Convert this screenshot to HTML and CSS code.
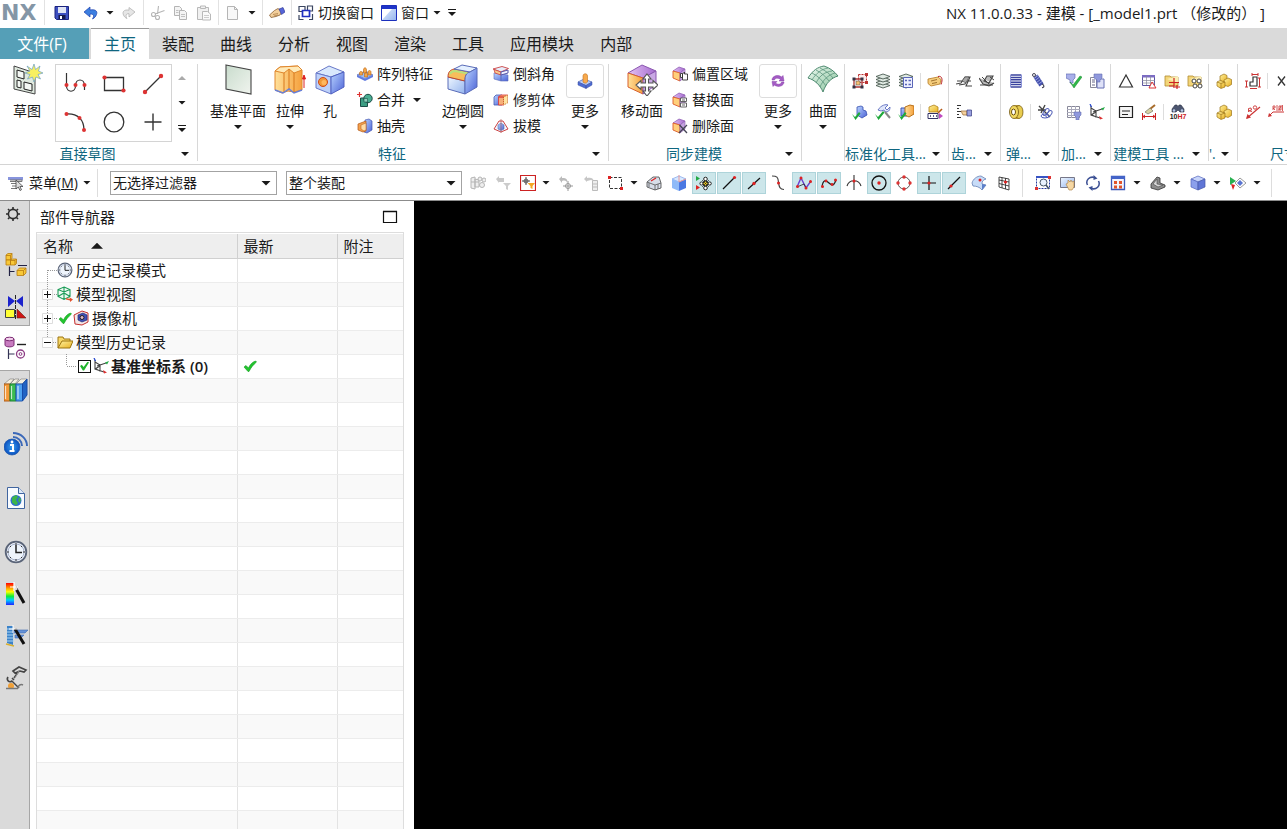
FILE: index.html
```html
<!DOCTYPE html>
<html lang="zh-CN">
<head>
<meta charset="utf-8">
<meta name="viewport" content="width=device-width, initial-scale=1">
<title>NX 11.0.0.33 - 建模</title>
<link rel="stylesheet" href="styles.css">
</head>
<body>
<svg class="sprite" aria-hidden="true">
<defs>
<linearGradient id="gBlue" x1="0" y1="0" x2="1" y2="1"><stop offset="0" stop-color="#b9d4ff"/><stop offset="1" stop-color="#4b62d6"/></linearGradient>
<linearGradient id="gLight" x1="0" y1="0" x2="1" y2="1"><stop offset="0" stop-color="#eef6ff"/><stop offset="1" stop-color="#94b4ee"/></linearGradient>
<linearGradient id="gOrange" x1="0" y1="0" x2="1" y2="0"><stop offset="0" stop-color="#ffe09a"/><stop offset="1" stop-color="#f5a03c"/></linearGradient>
<linearGradient id="gYellow" x1="0" y1="0" x2="1" y2="1"><stop offset="0" stop-color="#fff2a0"/><stop offset="1" stop-color="#e8b020"/></linearGradient>
<linearGradient id="gPlate" x1="0" y1="0" x2="1" y2="1"><stop offset="0" stop-color="#c9dccd"/><stop offset="1" stop-color="#f0f4ee"/></linearGradient>
<linearGradient id="gGreen" x1="0" y1="0" x2="1" y2="1"><stop offset="0" stop-color="#eef9f0"/><stop offset="1" stop-color="#86c29c"/></linearGradient>
<linearGradient id="gPurple" x1="0" y1="0" x2="1" y2="0"><stop offset="0" stop-color="#e3c2f2"/><stop offset="1" stop-color="#a56bd0"/></linearGradient>
<linearGradient id="gRain" x1="0" y1="0" x2="0" y2="1"><stop offset="0" stop-color="#f00"/><stop offset=".25" stop-color="#fa0"/><stop offset=".4" stop-color="#ff0"/><stop offset=".6" stop-color="#1e3"/><stop offset=".78" stop-color="#0cf"/><stop offset="1" stop-color="#22f"/></linearGradient>
<radialGradient id="gInfo"><stop offset="0" stop-color="#3aa0f0"/><stop offset="1" stop-color="#0a50c0"/></radialGradient>
</defs>

<symbol id="save" viewBox="0 0 16 16"><path d="M1 1.500h13.500v13H2.500L1 13z" fill="#3c4fc0" stroke="#1b237e"/><path d="M4 2h8v6H4z" fill="#dfe4f4"/><path d="M4.500 10h7v4h-7z" fill="#161a4c"/><path d="M6 11h2v3H6z" fill="#fff"/></symbol>
<symbol id="undo" viewBox="0 0 16 16"><path d="M1 7l6-5v3c5-1 8 1 6.500 4.500-.7 2-2 3.500-4 4.500 1.500-2.500 2-5-2.500-5v3z" fill="#3c7fe0" stroke="#1c3fae" stroke-width=".7"/></symbol>
<symbol id="redo" viewBox="0 0 16 16"><path d="M14 7L8 2.500v2.700C3 4.200 1 7 2.500 10c.6 1.500 2 3 3.500 3.500C4.500 11 4.500 8.500 8 8.700V12z" fill="#e6e6e6" stroke="#b4b4b4" stroke-width=".8"/></symbol>
<symbol id="cut" viewBox="0 0 16 16"><g fill="none" stroke="#b5b5b5" stroke-width="1.100"><path d="M8.500 1L7.500 9M14.500 5.500L5 9"/><circle cx="3.500" cy="9.500" r="2"/><circle cx="7.500" cy="12.500" r="2"/></g></symbol>
<symbol id="copy" viewBox="0 0 16 16"><g fill="#f4f4f4" stroke="#b4b4b4"><path d="M1.500 1.500h5l2 2v7h-7z"/><path d="M6.500 5.500h5l2 2v7h-7z"/><path d="M3 5.500h2.500M3 7.500h2.500M8 9.500h4M8 11.500h4" stroke-width=".8"/></g></symbol>
<symbol id="paste" viewBox="0 0 16 16"><g fill="#f1f1f1" stroke="#b9b9b9"><path d="M1.500 2.500h11v12h-11z"/><path d="M4.500 1h5v2.500h-5z"/><path d="M6.500 6.500h5l3 2.500v6h-8z" fill="#fafafa"/><path d="M8 10.500h5M8 12.500h5" stroke-width=".7"/></g></symbol>
<symbol id="newdoc" viewBox="0 0 16 16"><path d="M2.500 1.500h7l3 3v10h-10z" fill="#f8f8f8" stroke="#b5b5b5"/><path d="M9.500 1.500v3h3" fill="none" stroke="#b5b5b5"/></symbol>
<symbol id="handkey" viewBox="0 0 16 16"><path d="M.5 10l5-4.500L9 3.500l4 3-2 3.500-4 1.500-5 1z" fill="#f2cf9c" stroke="#8a6236" stroke-width=".8"/><path d="M10 4l4-1.500L16 7l-3.500 2.500z" fill="#5665d8" stroke="#26308e" stroke-width=".6"/><path d="M4 9.500l5-1M5 11l4-1" stroke="#a8763c" stroke-width=".7"/></symbol>
<symbol id="switchw" viewBox="0 0 16 16"><g fill="#fff" stroke="#3a4560" stroke-width="1.200"><path d="M1 1.500h6v5H1zM9.500 1h5v5h-5z"/><path d="M4.500 5.500h7v6h-7z" stroke="#2030c0" stroke-width="1.700"/><path d="M1 10v4.500h4.500M11 14.500h3.500V9" fill="none"/></g></symbol>
<symbol id="window" viewBox="0 0 16 16"><path d="M.5.500h15v15H.5z" fill="url(#gLight)" stroke="#1b2fbc"/><path d="M1 1h14v3H1z" fill="#1e34c8"/><path d="M1 4h10L1 15z" fill="#fff"/></symbol>

<symbol id="sketch" viewBox="0 0 32 32"><path d="M3 2l21 7v21L3 25z" fill="#dfe9df" stroke="#444"/><g fill="#f4f8f4" stroke="#222"><path d="M6 6l7 2v7l-7-2zM6 16l4 1v7l-4-1zM13 18l8 2v7l-8-2z"/></g><path d="M23 0l1.500 5.500L29 2l-1.500 5L32 9l-5 1.500 2.500 4.500-4.500-2-2 5-1.500-5-5 2 2.500-4.500-5-1.500 5-2L16 2l5 3.500z" fill="#f8f060" stroke="#6ca0c8" stroke-width=".7"/></symbol>
<symbol id="profile" viewBox="0 0 24 24"><path d="M3.500 1v13c0 7 9 7 9 0 0-8 9-8 9 0v4" fill="none" stroke="#333" stroke-width="1.200"/><g fill="#d33"><circle cx="3.500" cy="13" r="2"/><circle cx="12.500" cy="13" r="2"/><circle cx="21.500" cy="13" r="2"/></g></symbol>
<symbol id="rect" viewBox="0 0 24 24"><path d="M2.500 5.500h19v13h-19z" fill="none" stroke="#333" stroke-width="1.300"/><circle cx="2.500" cy="5.500" r="2.100" fill="#d33"/><circle cx="21.500" cy="18.500" r="2.100" fill="#d33"/></symbol>
<symbol id="line" viewBox="0 0 24 24"><path d="M4 20L20 4" stroke="#333" stroke-width="1.300"/><circle cx="4" cy="20" r="2.200" fill="#d33"/><circle cx="20" cy="4" r="2.200" fill="#d33"/></symbol>
<symbol id="arc" viewBox="0 0 24 24"><path d="M3 4C15 3 21 10 21 20" fill="none" stroke="#333" stroke-width="1.300"/><g fill="#d33"><circle cx="3.500" cy="4" r="2"/><circle cx="16.500" cy="8" r="2"/><circle cx="21" cy="20" r="2"/></g></symbol>
<symbol id="circle" viewBox="0 0 24 24"><circle cx="12" cy="12" r="9.800" fill="none" stroke="#333" stroke-width="1.300"/></symbol>
<symbol id="plus" viewBox="0 0 24 24"><path d="M12 3.500v17M3.500 12h17" stroke="#333" stroke-width="1.400"/></symbol>
<symbol id="plane" viewBox="0 0 32 32"><path d="M4 1l25 5v24L4 25z" fill="url(#gPlate)" stroke="#444" stroke-width="1.100"/></symbol>
<symbol id="extrude" viewBox="0 0 32 32"><path d="M1 7l5-4 18-1 4 4v20l-8 2-6-1-6 2-7-3z" fill="url(#gOrange)" stroke="#e0862c"/><path d="M1 7l5-4 18-1 4 4-8 3-5-4-5 4z" fill="#ffeab8" stroke="#e0862c"/><path d="M10 9v19M15 5v20M20 9v19" stroke="#d8781c"/><path d="M1 26l8 3 6-4 5 4 8-3" fill="none" stroke="#6880d8" stroke-width="1.500"/><path d="M30 24V13M28.500 15l1.500-4 1.500 4z" stroke="#d22" fill="#d22"/></symbol>
<symbol id="hole" viewBox="0 0 32 32"><path d="M2 9L15 2l15 6-13 5z" fill="#d9e8fc" stroke="#6878c8"/><path d="M2 9l15 4v17L2 24z" fill="#bdd1fa" stroke="#6878c8"/><path d="M17 13l13-5v15l-13 7z" fill="url(#gBlue)" stroke="#5060c0"/><circle cx="9" cy="18" r="4.500" fill="#f09a38" stroke="#d04818"/><circle cx="10" cy="18.500" r="2.500" fill="#ffb860"/></symbol>
<symbol id="pattern" viewBox="0 0 16 16"><path d="M0 9l8-4 8 4-8 4z" fill="#9cbcf4" stroke="#5164b8" stroke-width=".7"/><path d="M0 9v2l8 4 8-4V9l-8 4z" fill="#5f7ae0"/><path d="M2.500 7c0-2 3-2 3 0v2h-3zM6.500 4c0-3 3-3 3 0v3h-3zM7.500 8c0-2 3-2 3 0v3h-3zM11 6c0-2 3-2 3 0v3h-3z" fill="#f5a548" stroke="#b86a18" stroke-width=".6"/></symbol>
<symbol id="unite" viewBox="0 0 16 16"><path d="M3.500 6h7v8.500h-7z" fill="#3c9e83" stroke="#1c4d48"/><circle cx="11" cy="6.500" r="4.200" fill="#4aae92" stroke="#1c4d48"/><path d="M7 6.500h3.500V10H7z" fill="#8cd2bd" stroke="#1c4d48" stroke-width=".6"/><path d="M2.500 0v5M0 2.500h5" stroke="#d33" stroke-width="1.200"/></symbol>
<symbol id="shell" viewBox="0 0 16 16"><path d="M8 2l4-1 3 2v9l-5 3-3-1z" fill="url(#gBlue)" stroke="#4658b0" stroke-width=".7"/><path d="M1 6l8-3v10l-3 1-5-2z" fill="#f3a04c" stroke="#b25818" stroke-width=".7"/><path d="M4 7l5-2v7l-2 1-3-2z" fill="#ffdca6" stroke="#b25818" stroke-width=".5"/></symbol>
<symbol id="blend" viewBox="0 0 32 32"><path d="M1 13v12l17 5V17z" fill="url(#gLight)" stroke="#5a6cb8"/><path d="M1 13c0-5 2-7 6-8l16 3c-4 1-5 4-5 9z" fill="#f7bd5c" stroke="#c0442c"/><path d="M3 10c1-2 2-3 5-3l13 2.500" fill="none" stroke="#b8e07c" stroke-width="1.800"/><path d="M7 5l8-4 15 3-7 4z" fill="#e4f0ff" stroke="#5a6cb8"/><path d="M18 30V17c0-5 1-8 5-9l7-4v19z" fill="url(#gBlue)" stroke="#5a6cb8"/></symbol>
<symbol id="chamfer" viewBox="0 0 16 16"><path d="M1 7v6l7 2V8zM8 8l7 1v6l-7 0z" fill="url(#gBlue)" stroke="#5a6cb8" stroke-width=".6"/><path d="M0 3l9-2.500 6.500 2L8 6z" fill="#e6eefc" stroke="#c44" stroke-width=".9"/><path d="M1 3.500L8 6v3L2 7z" fill="#f8c88c" stroke="#c44" stroke-width=".8"/><path d="M8 6l7-2v3L8 9z" fill="#f3f3ff" stroke="#55a"/></symbol>
<symbol id="trim" viewBox="0 0 16 16"><path d="M1 5l2-2h6v10H1z" fill="url(#gBlue)" stroke="#4458b0" stroke-width=".8"/><path d="M5.500 5l2-2h7l-2 2zM5.500 5h5v8h-5z" fill="#f6b078" stroke="#d33" stroke-width=".8"/><path d="M10.500 5l4-2v8l-4 2z" fill="#ffe4a0" stroke="#c06820" stroke-dasharray="1 1"/></symbol>
<symbol id="draft" viewBox="0 0 16 16"><path d="M1 11l5-8h4l5 8-7 3z" fill="#f5f5ff" stroke="#c44"/><path d="M5 7l3-2 3 2v4l-3 1.500L5 11z" fill="url(#gBlue)" stroke="#57a" stroke-width=".6"/><path d="M8 1v14" stroke="#a55" stroke-width=".6"/></symbol>
<symbol id="boss" viewBox="0 0 16 16"><path d="M1 9l6-3 8 3-6 3.500z" fill="#b9cdf6" stroke="#4860b4" stroke-width=".7"/><path d="M1 9v3l8 3.500V12.500zM9 12.500v3l6-3.500V9z" fill="#4d6cd4" stroke="#3a4ca0" stroke-width=".5"/><path d="M6 3c0-3 4.500-3 4.500 0v6c-1 1.500-3.500 1.500-4.500 0z" fill="#f7a94d" stroke="#c47018" stroke-width=".6"/></symbol>

<symbol id="moveface" viewBox="0 0 32 32"><path d="M2 9L16 1l14 6-13 7z" fill="url(#gPurple)" stroke="#8a56b0"/><path d="M2 9l15 5v16L2 23z" fill="url(#gOrange)" stroke="#d8602c"/><path d="M17 14l13-7v14l-13 9z" fill="#c9a8e4" stroke="#8a56b0"/><path d="M21 10l4 5h-2.500v4H27v-2.500l5 4.500-5 4.500V23h-4.500v4H25l-4 5-4-5h2.500v-4H15v2.500L10 21l5-4.500V19h4.500v-4H17z" fill="#fff" stroke="#555" stroke-width="1.100"/></symbol>
<symbol id="facecube" viewBox="0 0 16 16"><path d="M1 5l6-4 6 2-5 4z" fill="url(#gPurple)" stroke="#8a56b0" stroke-width=".7"/><path d="M1 5l7 2v8l-7-3z" fill="#ffcf7a" stroke="#dc5a28" stroke-width=".9"/><path d="M8 7l5-4v8l-5 4z" fill="#c3a3df" stroke="#8a56b0" stroke-width=".6"/></symbol>
<symbol id="offset" viewBox="0 0 16 16"><use href="#facecube" width="16" height="16"/><path d="M8.500 7.500h2v4h-2zM10.500 8l2-2v2h3v6h-5z" fill="#fff" stroke="#333" stroke-width=".9"/></symbol>
<symbol id="replace" viewBox="0 0 16 16"><use href="#facecube" width="16" height="16"/><path d="M8.500 6h6v3.500h-6zM8.500 11h6v4h-6zM10 8h3M10 13h3" fill="#fff" stroke="#555" stroke-width=".9"/></symbol>
<symbol id="delface" viewBox="0 0 16 16"><use href="#facecube" width="16" height="16"/><path d="M7.500 7l7.500 8M15 7l-8 8" stroke="#445" stroke-width="1.300"/></symbol>
<symbol id="cycle" viewBox="0 0 16 16"><path d="M2 7c0-4 6-6 9.500-3L13 2.500 14 8H9l1.500-1.500C8 4.500 5 5 4.500 7zM14 9c0 4-6 6-9.500 3L3 13.500 2 8.500h5L5.500 10c2.500 2 5.500 1.500 6-1z" fill="#a45cc4" stroke="#8740aa" stroke-width=".5"/></symbol>
<symbol id="surface" viewBox="0 0 32 32"><path d="M1 14C6 6 11 3 17 2c6 2 10 5 14 10-7 2-12 7-15 16C13 21 8 16 1 14z" fill="url(#gGreen)" stroke="#4e8a70"/><g fill="none" stroke="#5c947c" stroke-width=".8"><path d="M5 16c4-7 10-11 16-12M9 19C13 11 18 8 25 7M13 23c3-7 8-12 15-14M13 4c6 3 10 6 13 10M9 6c6 3 10 7 13 11M5 9c6 3 10 7 14 13"/></g></symbol>

<symbol id="sframe" viewBox="0 0 16 16"><path d="M6.500 1.500h8v8h-8z" fill="#fbeaea" stroke="#b33" stroke-dasharray="2 1"/><path d="M2 6h8v8H2z" fill="none" stroke="#a33" stroke-width="1.300"/><path d="M4 8h4v4H4z" fill="#f8c070" stroke="#555" stroke-width=".6"/><path d="M.5 4.500h3v3h-3zM8.500 4.500h3v3h-3zM.5 12.500h3v3h-3zM8.500 12.500h3v3h-3z" fill="#334"/><path d="M13 0h3v3h-3zM13 8h3v3h-3z" fill="#b33"/></symbol>
<symbol id="layers" viewBox="0 0 16 16"><g fill="#dfe9e2" stroke="#4c5c54" stroke-width=".9"><path d="M1 12.500L8 10l7 2.500L8 15z"/><path d="M1 9.500L8 7l7 2.500L8 12z"/><path d="M1 6.500L8 4l7 2.500L8 9z"/><path d="M1 3.500L8 1l7 2.500L8 6z"/></g></symbol>
<symbol id="layerlist" viewBox="0 0 16 16"><use href="#layers" width="16" height="16"/><path d="M5.500 4.500h9v10h-9z" fill="#eef0ff" stroke="#5a66b8"/><path d="M7 7.500h2M10.500 7.500h2.500M7 11.500h2M10.500 11.500h2.500" stroke="#5a66b8" stroke-width="1.500"/></symbol>
<symbol id="tag" viewBox="0 0 16 16"><path d="M1 6l10-2 3 2.500-1 4.500-9 2-3-2.500z" fill="#f5cd7c" stroke="#b57a22" stroke-width=".8"/><path d="M4 8l6-1.500M5 10.500l5-1" stroke="#8a5a1a" stroke-width=".8"/><path d="M11 3.500c4-1 5 3 3 8" fill="none" stroke="#b22"/></symbol>
<symbol id="bluecheck" viewBox="0 0 16 16"><path d="M5 3l4-1 2 1v3l3 1 1 4-5 3-5-3z" fill="url(#gBlue)" stroke="#3850b0" stroke-width=".8"/><path d="M0 10l3 3 4-5 1.500 1.500L3.500 16z" fill="#1fa83a"/></symbol>
<symbol id="wrenchcheck" viewBox="0 0 16 16"><path d="M3 6c3-5 8-6 10-5l-3 3 2 2 3-3c0 4-2 5-5 5l-1-2-3 1z" fill="#dfe6fa" stroke="#4a5cb8" stroke-width=".8"/><path d="M10 8l5 6" stroke="#888" stroke-width="2"/><path d="M0 10l3 3 5-6 1.500 1.500L3.500 16z" fill="#1fa83a"/></symbol>
<symbol id="orangecheck" viewBox="0 0 16 16"><path d="M3 4h6v8H3z" fill="url(#gBlue)" stroke="#3850b0"/><path d="M7 3l5-2 4 1v8l-5 3-4-2z" fill="url(#gOrange)" stroke="#b87018"/><path d="M0 10l3 3 4-5 1.500 1.500L3.500 16z" fill="#1fa83a"/></symbol>
<symbol id="boxedit" viewBox="0 0 16 16"><path d="M2 3l5-2 4 2v5H2z" fill="url(#gYellow)" stroke="#b08018" stroke-width=".8"/><path d="M1 9.500h10v5H1z" fill="#fff" stroke="#336"/><path d="M3 12h1M6 12h1M9 12h1" stroke="#336" stroke-width="1.400"/><path d="M15 5l-4 4" stroke="#b65a18" stroke-width="1.600"/><path d="M12 9v6l4-3z" fill="#c04ac0"/></symbol>
<symbol id="gear1" viewBox="0 0 16 16"><path d="M0 11l5-1 4-6h5l-4 9h6M3 12l6-1 3-7M1 8h14" fill="none" stroke="#444" stroke-width="1.100"/><path d="M6 8l3-4h4l-3 6z" fill="#aaa" stroke="#444" stroke-width=".6"/></symbol>
<symbol id="gear2" viewBox="0 0 16 16"><path d="M0 5l4 6 6 2 5-3M8 3h6l-4 7-5-2z" fill="#bbb" stroke="#444" stroke-width="1.100"/><path d="M1 12h13M3 4l7 7M11 4l4 3" stroke="#444"/></symbol>
<symbol id="gearhand" viewBox="0 0 16 16"><path d="M1 1.500h4M1 4.500h2M1 7.500h4M1 10.500h2M1 13.500h4" stroke="#333"/><path d="M5 7h6v4H7z" fill="#f4d09c" stroke="#966832" stroke-width=".7"/><path d="M11 6h4.500v6H11z" fill="#9aa0e0" stroke="#333a80" stroke-width=".7"/></symbol>
<symbol id="spring1" viewBox="0 0 16 16"><path d="M3 2h10M3 4.400h10M3 6.800h10M3 9.200h10M3 11.600h10M3 14h10" stroke="#3b449e" stroke-width="1.500"/><path d="M2.500 1.500v13M13.500 1.500v13" stroke="#8e96d8"/></symbol>
<symbol id="spring2" viewBox="0 0 16 16"><path d="M4.500 3l6 9" stroke="#4450ac" stroke-width="5"/><path d="M3 5.500l4-3M4 7.500l4-3M5.500 9.500l4-3M7 11.500l4-3" stroke="#a8b0e8" stroke-width=".8"/><circle cx="3" cy="2" r="1.500" fill="none" stroke="#445"/><path d="M11 11c3 1 2 4 0 3.500" fill="none" stroke="#445" stroke-width="1.200"/></symbol>
<symbol id="spring3" viewBox="0 0 16 16"><ellipse cx="9" cy="8" rx="6" ry="7" fill="#b28d1a"/><ellipse cx="11" cy="8" rx="4" ry="6.500" fill="#e8cc50" stroke="#705410" stroke-width=".7"/><ellipse cx="6" cy="8" rx="4.500" ry="6.500" fill="#f1d860" stroke="#705410" stroke-width=".8"/><ellipse cx="5.500" cy="8" rx="2" ry="3" fill="#fff" stroke="#705410"/></symbol>
<symbol id="spring4" viewBox="0 0 16 16"><path d="M1 6h8M8 1L4 9M2 2l11 11" stroke="#444" stroke-width="1.400"/><g fill="none" stroke="#5260b8"><ellipse cx="9" cy="8" rx="2" ry="4" transform="rotate(40 9 8)"/><ellipse cx="12" cy="10" rx="2" ry="4" transform="rotate(40 12 10)"/><ellipse cx="8" cy="12" rx="4" ry="2"/></g></symbol>
<symbol id="probecheck" viewBox="0 0 16 16"><path d="M0 1h9v4l-2 2v3H4V7L0 5z" fill="#a9b0ea" stroke="#6670b4" stroke-width=".7"/><path d="M4 9l3 3 7-9 2 1-8 11z" fill="#2fb848" stroke="#15862c" stroke-width=".5"/></symbol>
<symbol id="probelist" viewBox="0 0 16 16"><path d="M1.500 4.500h6v10h-6z" fill="#fff" stroke="#889"/><path d="M3 7h3M3 9h3M3 12h3" stroke="#668"/><path d="M8 6h7v9H8z" fill="#dfe2f8" stroke="#6670b4"/><path d="M5 1h8v4l-2 2v2H8V7L5 5z" fill="#8f98dc" stroke="#6670b4" stroke-width=".6"/></symbol>
<symbol id="probegrid" viewBox="0 0 16 16"><path d="M1.500 2.500h12v11h-12z" fill="#fff" stroke="#889"/><path d="M1 5.500h13M1 8.500h13M1 11.500h13M5.500 2v12M9.500 2v12" stroke="#aab"/><path d="M8 8h7v3l-2 2v3h-3v-3l-2-2z" fill="#8f98dc" stroke="#6670b4" stroke-width=".6"/></symbol>
<symbol id="csys" viewBox="0 0 16 16"><path d="M2 2v9l9 3M2 4l5 3v6M7 8l-5 3M4 8l9-3M7 13l-4-2" fill="none" stroke="#444" stroke-width="1.100"/><path d="M1 0l1.500 3" stroke="#24c" stroke-width="1.200"/><path d="M12 4.500l4-1.500-2 3.500z" fill="#2a4"/><path d="M10 12l4 2.500-3 1z" fill="#d33"/></symbol>
<symbol id="tri" viewBox="0 0 16 16"><path d="M8 2l6.500 12h-13z" fill="none" stroke="#333" stroke-width="1.200"/></symbol>
<symbol id="tabletri" viewBox="0 0 16 16"><path d="M1.500 2.500h12v10h-12z" fill="#fff" stroke="#5a52a0"/><path d="M1 2h13v2.500H1z" fill="#7c6cc4"/><path d="M1 7.500h13M1 10h13M5.500 3v9M9.500 3v9" stroke="#889" stroke-width=".7"/><path d="M11 9l4 6H8z" fill="#fff" stroke="#d33"/></symbol>
<symbol id="folder" viewBox="0 0 16 16"><path d="M1 3h5l1 1h7v9H1z" fill="#f3d578" stroke="#b08c30" stroke-width=".8"/><path d="M3 6l11-3v7z" fill="#fbeeb4"/></symbol>
<symbol id="folderplus" viewBox="0 0 16 16"><use href="#folder" width="16" height="16"/><path d="M10 5v10M5 9.500h10M5 13h5M13 12v4M11 14h5" stroke="#c22" stroke-width="1.200"/></symbol>
<symbol id="foldergear" viewBox="0 0 16 16"><use href="#folder" width="16" height="16"/><g fill="#fff" stroke="#444"><circle cx="7" cy="8" r="2"/><circle cx="12" cy="8" r="2"/><circle cx="8" cy="13" r="2"/><circle cx="13" cy="13" r="2"/></g></symbol>
<symbol id="note" viewBox="0 0 16 16"><path d="M1.500 2.500h13v11h-13z" fill="#f4f4f4" stroke="#222" stroke-width="1.200"/><path d="M4 7h8M4 10.500h6" stroke="#222"/></symbol>
<symbol id="brushdim" viewBox="0 0 16 16"><path d="M14 1L9 5" stroke="#a86c2a" stroke-width="2"/><path d="M9 4l3 3-5 3-3-2z" fill="#d8d2a4" stroke="#776" stroke-width=".7"/><path d="M1.500 9v7M14.500 9v7M2 12.500h12M4 11l-2 1.500L4 14M12 11l2 1.500-2 1.500" fill="none" stroke="#c22"/></symbol>
<symbol id="binoc" viewBox="0 0 16 9"><path d="M2 5l3-4h2l1 2 1-2h2l3 4v3h-4l-2-2-2 2H2z" fill="#4c5670" stroke="#2a3144" stroke-width=".6"/><circle cx="4" cy="6.500" r="1.300" fill="#b8cae8"/><circle cx="12" cy="6.500" r="1.300" fill="#b8cae8"/></symbol>
<symbol id="cubes" viewBox="0 0 16 16"><g fill="url(#gYellow)" stroke="#9c7418" stroke-width=".7"><path d="M4 3l4-2 3 1.500V7L7 9 4 7z"/><path d="M8 7l4-2 3.500 1.500v5L12 13.500 8 12z"/><path d="M1 9l3-1.500L9 9v5l-4 1.500L1 13z"/></g><path d="M1 9l4 1.500V15M5 10.500L9 9" fill="none" stroke="#9c7418" stroke-width=".7"/></symbol>
<symbol id="dims" viewBox="0 0 16 16"><path d="M5 13V9h3V4h4v9z" fill="none" stroke="#333" stroke-width="1.200"/><path d="M7 1.500h6M7 0v3M13 0v3M14.500 5v9M13 5h3M13 14h3M1.500 8v6M0 8h3M0 14h3M5 15.500h7" stroke="#c33"/></symbol>
<symbol id="xmark" viewBox="0 0 16 16"><path d="M4 3.500l7 9M11 3.500l-7 9" stroke="#333" stroke-width="1.300"/></symbol>
<symbol id="radial" viewBox="0 0 16 16"><path d="M15 3L2 14" stroke="#c33" stroke-width="1.100"/><path d="M1 15l1.500-5L6 13.500z" fill="#c33"/><path d="M3.500 8V4.500l2.500-.5.500 2-2.500.8L7 7.500" fill="none" stroke="#c33" stroke-width=".9"/><circle cx="10" cy="3.500" r="1.700" fill="none" stroke="#c33" stroke-width=".9"/></symbol>
<symbol id="radialb" viewBox="0 0 16 16"><path d="M1 12l4-4h11" fill="none" stroke="#c33"/><path d="M0 13l1-4 3 3z" fill="#c33"/><path d="M5 6V2h2v2H5l2 2M9 1v6M14.500 1v6M11 2h2v4h-2zM10.500 6.500l3-5" fill="none" stroke="#c33" stroke-width=".8"/></symbol>

<symbol id="menuicon" viewBox="0 0 16 16"><path d="M0 2h15v3H0z" fill="#8794dd"/><path d="M2 5h12v1.500H2M3 8.500h6M4 11h5M3 13.500h6" stroke="#777" fill="none"/><path d="M8 5v9l2.300-2 1.700 3.500 1.500-.8-1.600-3.200H15z" fill="#ddd" stroke="#444" stroke-width=".8"/></symbol>
<symbol id="f1" viewBox="0 0 16 16"><g fill="#eee" stroke="#b5b5b5"><path d="M1 3l4-1v12l-4-1zM5 4l4 1v7H5zM1 7h8"/><circle cx="10" cy="4" r="2"/><circle cx="14" cy="5" r="2"/><circle cx="12" cy="10" r="2.500"/></g></symbol>
<symbol id="f2" viewBox="0 0 16 16"><path d="M1 4l3-3v2h5v4H4v1z" fill="#c9c9c9"/><path d="M8 8h8l-3 3v4l-2-1v-3z" fill="#ccc"/></symbol>
<symbol id="f3" viewBox="0 0 16 16"><path d="M.5.500h15v15H.5z" fill="#fff" stroke="#c22" stroke-width="1.200"/><path d="M6 2v8M2 6h8" stroke="#444"/><circle cx="6" cy="6" r="2" fill="none" stroke="#444" stroke-width=".8"/><path d="M7.500 8H15l-2.500 3v3l-2-1v-2z" fill="#f5a623"/></symbol>
<symbol id="f4" viewBox="0 0 16 16"><path d="M1 4l3-3v2c5 0 6 2 5 5 0-2-2-3-5-2v2z" fill="#bbb"/><path d="M10 6v10M5 11h10" stroke="#999"/><circle cx="10" cy="11" r="2.500" fill="none" stroke="#999"/></symbol>
<symbol id="f5" viewBox="0 0 16 16"><path d="M1 4l3-3v2c4-1 6 0 7 3l-3-1-4 1v1z" fill="#c6c6c6"/><path d="M9.500 5.500h5v10h-5zM9.500 9h5M9.500 12h5" fill="#eee" stroke="#bbb"/></symbol>
<symbol id="f6" viewBox="0 0 16 16"><path d="M1.500 2.500h12v11h-12z" fill="none" stroke="#333" stroke-dasharray="3 1.500"/><path d="M0 1h3v3H0zM12 12h3v3h-3z" fill="#d22"/></symbol>
<symbol id="f7" viewBox="0 0 16 16"><path d="M1 7l6-5h6l2 6v5l-6 2-8-3z" fill="#d7dde8" stroke="#444" stroke-width=".8"/><path d="M1 7l8 3 6-2M9 10v5M3 8v4M12 9v5" stroke="#555" fill="none" stroke-width=".8"/><path d="M5 6l5-3" stroke="#d22" stroke-width="1.200"/></symbol>
<symbol id="f8" viewBox="0 0 16 16"><path d="M1 4l7-3 7 3-7 3z" fill="#d7e8ff" stroke="#6b94e4" stroke-width=".6"/><path d="M1 4l7 3v9l-7-3z" fill="#8ebaf8"/><path d="M8 7l7-3v9l-7 3z" fill="#4a78e2"/><path d="M8 0v7l7-3" stroke="#e79a9a" fill="none"/></symbol>
<symbol id="f9" viewBox="0 0 16 16"><path d="M0 1l4 2.500L0 6z" fill="#2a4"/><path d="M0 10l4 2.500L0 15z" fill="#d22"/><g fill="#fff" stroke="#222"><circle cx="9.500" cy="4" r="1.800"/><circle cx="9.500" cy="13" r="1.800"/><circle cx="5.500" cy="8.500" r="1.600"/><circle cx="13.700" cy="8.500" r="1.600"/></g><circle cx="9.500" cy="8.500" r="2.400" fill="#f4d020" stroke="#222"/><path d="M6 5l7 7M13 5l-7 7" stroke="#222" stroke-width=".7"/></symbol>
<symbol id="s1" viewBox="0 0 16 16"><path d="M2 14L13 3" stroke="#111" stroke-width="1.200"/><circle cx="13.500" cy="2.500" r="1.600" fill="#d22"/></symbol>
<symbol id="s2" viewBox="0 0 16 16"><path d="M2 14L14 3" stroke="#111" stroke-width="1.200"/><circle cx="8" cy="8.500" r="1.700" fill="#d22"/></symbol>
<symbol id="s3" viewBox="0 0 16 16"><path d="M1 1c5 0 6 1 6.500 6S9 14.500 13 14.500" fill="none" stroke="#444" stroke-width="1.200"/><circle cx="7.500" cy="8" r="1.500" fill="#d22"/></symbol>
<symbol id="s4" viewBox="0 0 16 16"><path d="M1 12L5 3l5 10 5-7" fill="none" stroke="#6a3fd0" stroke-width="1.400"/><path d="M1 12l7-3 2 4" fill="none" stroke="#222" stroke-width=".8"/><g fill="#d22"><circle cx="1.500" cy="11.500" r="1.500"/><circle cx="5" cy="3" r="1.500"/><circle cx="10" cy="13" r="1.500"/><circle cx="14.500" cy="6.500" r="1.500"/></g></symbol>
<symbol id="s5" viewBox="0 0 16 16"><path d="M1 12C2 4 5 5 8 8s5 3 7-3" fill="none" stroke="#222" stroke-width="1.200"/><g fill="#d22"><circle cx="1.500" cy="11.500" r="1.500"/><circle cx="5" cy="6" r="1.400"/><circle cx="11" cy="9.500" r="1.400"/><circle cx="14.500" cy="5" r="1.500"/></g></symbol>
<symbol id="s6" viewBox="0 0 16 16"><path d="M8 0v15M1 11c2-7 12-7 14 0" fill="none" stroke="#333" stroke-width="1.100"/><circle cx="8" cy="6" r="1.500" fill="#d22"/></symbol>
<symbol id="s7" viewBox="0 0 16 16"><circle cx="8" cy="8" r="7" fill="none" stroke="#111" stroke-width="1.300"/><circle cx="8" cy="8" r="1.700" fill="#d22"/></symbol>
<symbol id="s8" viewBox="0 0 16 16"><circle cx="8" cy="8" r="6" fill="none" stroke="#555"/><g fill="#d33"><circle cx="8" cy="2" r="1.700"/><circle cx="8" cy="14" r="1.700"/><circle cx="2" cy="8" r="1.700"/><circle cx="14" cy="8" r="1.700"/></g></symbol>
<symbol id="s9" viewBox="0 0 16 16"><path d="M8 1v14M1 8h14" stroke="#111" stroke-width="1.200"/><circle cx="8" cy="8" r="1.600" fill="#d22"/></symbol>
<symbol id="s10" viewBox="0 0 16 16"><path d="M2 14L14 2" stroke="#111" stroke-width="1.200"/><circle cx="5" cy="11" r="1.600" fill="#d22"/></symbol>
<symbol id="s11" viewBox="0 0 16 16"><path d="M1 8c1-4 5-7 9-7l5 3c-3 1-4 2-4 5l4 1-4 5c-2-3-6-4-9-4z" fill="#c7dcf8" stroke="#6480b4" stroke-width=".8"/><path d="M11 9l4 1-4 5z" fill="#5b7fca"/><circle cx="9" cy="5" r="1.500" fill="#d22"/></symbol>
<symbol id="s12" viewBox="0 0 16 16"><path d="M3 2l10 2v11L3 12zM3 5l10 2M3 8.500l10 2.500M6 2.500V13M9.500 3v11" fill="none" stroke="#333" stroke-width=".9"/><circle cx="9.500" cy="7" r="1.600" fill="#d22"/></symbol>
<symbol id="v1" viewBox="0 0 16 16"><path d="M1.500 2.500h13v11h-13z" fill="none" stroke="#223a9e" stroke-dasharray="2 1"/><path d="M1 1h14v2H1z" fill="#3854c4"/><circle cx="8.500" cy="7.500" r="3.500" fill="#e9f3ff" stroke="#456"/><path d="M11 10l3 4" stroke="#456" stroke-width="1.500"/><path d="M0 12h3v3H0zM13 1h3v3h-3z" fill="#d33"/></symbol>
<symbol id="v2" viewBox="0 0 16 16"><path d="M.5 2.500h14v10H.5z" fill="url(#gLight)" stroke="#778"/><path d="M6 9l2-1V5l2 2 1-2 1 2 2-1v6l-2 3h-3z" fill="#f6d8a4" stroke="#a87a3a" stroke-width=".6"/></symbol>
<symbol id="v3" viewBox="0 0 16 16"><path d="M2.500 10C0 5 5 1 9.500 2.500M13.500 6c2.500 5-2.500 9-7 7.500" fill="none" stroke="#3c5094" stroke-width="1.500"/><path d="M8.500 0l4 3.500-4 1.500zM7.500 16l-4-3.500 4-1.500z" fill="#3c5094"/></symbol>
<symbol id="v4" viewBox="0 0 16 16"><path d="M1.500 1.500h13v13h-13z" fill="#f3f5ff" stroke="#3d58b8" stroke-width="1.300"/><path d="M1 1h14v3H1z" fill="#4464c8"/><path d="M4 6h3v3H4zM9 6h3v3H9zM4 10.500h3v3H4zM9 10.500h3v3H9z" fill="#e2552c"/></symbol>
<symbol id="v5" viewBox="0 0 16 16"><path d="M1 9l6-7 3 1v5l5 2v2l-7 3-7-2z" fill="#8c8c8c" stroke="#333" stroke-width=".8"/><path d="M3 9l4-5v5l6 1-5 2z" fill="#d6d6d6" stroke="#444" stroke-width=".6"/></symbol>
<symbol id="v6" viewBox="0 0 16 16"><path d="M1 4l7-3 7 3-7 3z" fill="#c7d4fa" stroke="#5364bc" stroke-width=".7"/><path d="M1 4l7 3v8l-7-3z" fill="#8ca0ec" stroke="#5364bc" stroke-width=".7"/><path d="M8 7l7-3v8l-7 3z" fill="#6076d6" stroke="#4657a8" stroke-width=".7"/></symbol>
<symbol id="v7" viewBox="0 0 16 16"><path d="M0 2l6 4-6 4z" fill="#28b050"/><path d="M1 9l4 1-2 5z" fill="#d22"/><path d="M10 3l6 5-6 5-5-5z" fill="#fff" stroke="#999"/><path d="M10 5l3 3-3 3-3-3z" fill="#5a74d0"/></symbol>

<symbol id="gear" viewBox="0 0 16 16"><circle cx="8" cy="8" r="4.600" fill="none" stroke="#2e2e2e" stroke-width="1.600"/><path d="M8 1v2M8 13v2M1 8h2M13 8h2M3 3l1.500 1.500M11.500 11.500L13 13M13 3l-1.500 1.500M4.500 11.500L3 13" stroke="#2e2e2e" stroke-width="1.600"/></symbol>
<symbol id="asmnav" viewBox="0 0 24 24"><path d="M5.500 13.500v9.500M5.500 18.500h5M14 12.500h9" stroke="#224" stroke-width="1.200"/><g fill="#f8c838" stroke="#b87c10" stroke-width=".8"><path d="M2 2l2-1.500h4V5L6.500 7H2z"/><path d="M2 7h4.500v5H2zM6.500 7l2-1h4v4.500l-1.500 1.500H6.500z"/><path d="M13 17.500l2.500-2.500H22v5l-2.500 2.500H13z"/></g><path d="M2 2.500h4.500L8 .5M6.500 2.500V7M13 17.500h6.500L22 15M19.500 17.500v5M6.500 7.500H11L12.500 6M11 7.500V12" fill="none" stroke="#b87c10" stroke-width=".8"/></symbol>
<symbol id="constr" viewBox="0 0 24 24"><path d="M4 1l7 5-7 6zM19 1l-7 5 7 6z" fill="#1c22cc"/><path d="M11.500 0v24" stroke="#222" stroke-dasharray="4 1"/><path d="M1.500 14.500h9v8h-9z" fill="#ff3" stroke="#444"/><path d="M13 14l9 9h-9z" fill="#d01414" stroke="#621" stroke-width=".6"/></symbol>
<symbol id="partnav" viewBox="0 0 24 24"><path d="M1 3v6c0 2.500 9 2.500 9 0V3" fill="#c87cc0" stroke="#7c2c74"/><ellipse cx="5.500" cy="3" rx="4.500" ry="1.800" fill="#f0cdea" stroke="#7c2c74"/><path d="M13 8.500h9" stroke="#222" stroke-width="1.400"/><path d="M4.500 13v10M4.500 18h6" stroke="#335" stroke-width="1.200"/><circle cx="16.500" cy="18" r="4" fill="#fff" stroke="#8c3c84" stroke-width="1.300"/><circle cx="16.500" cy="18" r="1.400" fill="none" stroke="#8c3c84"/></symbol>
<symbol id="books" viewBox="0 0 24 24"><path d="M0 6l6-5h4L6 6zM6 6l5-5h4l-4 5zM12 6l5-5h6l-5 5z" fill="#f4efe0" stroke="#777" stroke-width=".6"/><path d="M0 6h6v17H0z" fill="#f59a38" stroke="#b05a14"/><path d="M6 6h6v17H6z" fill="#3cbc50" stroke="#1c8030"/><path d="M12 6h6.500v17H12z" fill="#4ca0f0" stroke="#2258b0"/><path d="M18.500 6L23 1v16l-4.500 6z" fill="#2264c4" stroke="#184ca8"/><path d="M1.500 8v13M7.500 8v13M14 8v13" stroke="#fff" stroke-width="1.200" opacity=".7"/></symbol>
<symbol id="info" viewBox="0 0 24 24"><circle cx="8" cy="15" r="8" fill="url(#gInfo)" stroke="#1c58a8" stroke-width=".7"/><path d="M6 13h3v6h1.500M5.500 19h5" fill="none" stroke="#fff" stroke-width="2"/><circle cx="8" cy="10" r="1.400" fill="#fff"/><path d="M9 5c5 0 9 4 9 9M9 1c8 0 14 6 14 13" fill="none" stroke="#3b68b8" stroke-width="2"/></symbol>
<symbol id="webdoc" viewBox="0 0 24 24"><path d="M3.500 1.500h11l6 6v15h-17z" fill="#f8fbff" stroke="#4065a0"/><path d="M14.500 1.500v6h6" fill="#dce8f8" stroke="#4065a0"/><circle cx="12" cy="14.500" r="5.500" fill="#2e6cd0"/><path d="M8 11.500l4-2.500 2 2-2 3 2 3-2 2.500-4-3zM15 11l2 2-1 4-2-2z" fill="#3db54a"/></symbol>
<symbol id="clock" viewBox="0 0 24 24"><circle cx="12" cy="12" r="10.300" fill="#e9eef8" stroke="#5a6478" stroke-width="1.800"/><circle cx="12" cy="12" r="8" fill="#eef4fc" stroke="#a8b4cc"/><path d="M12 5v7.500h6" fill="none" stroke="#222" stroke-width="1.500"/><path d="M12 3v2M12 19v2M3 12h2M19 12h2M6 6l1 1M17 17l1 1M18 6l-1 1M6 18l1-1" stroke="#333"/></symbol>
<symbol id="rainbow" viewBox="0 0 24 24"><path d="M2 1h8v22H2z" fill="url(#gRain)"/><path d="M11 5l9 16" stroke="#111" stroke-width="3"/><path d="M10 4l2.500 4" stroke="#ddd" stroke-width="3"/><path d="M10 0v9M6 5h8" stroke="#fff" stroke-width="1.200"/></symbol>
<symbol id="wand" viewBox="0 0 24 24"><path d="M3 2h6v19l-6-2z" fill="#3c82c8"/><path d="M3 5h7M3 8h7M3 11h7M3 14h7M3 17h7" stroke="#a8d4f4"/><path d="M9 6h15l-3 3H9zM11 11h9l-3 3h-6z" fill="#6492d8" stroke="#3c6ab0" stroke-width=".6"/><path d="M2 20l8 2" stroke="#d8b030" stroke-width="1.500"/><path d="M11 5l9 15" stroke="#111" stroke-width="3"/><path d="M9 1v8M5 5h8" stroke="#fff"/></symbol>
<symbol id="robot" viewBox="0 0 24 24"><circle cx="7" cy="20" r="3" fill="#f0a038"/><path d="M9 5l6-4 7 3-2 2-4-1-5 2zM15 5l-5 7M4 11c-2 3 1 6 4 4l7 7M8 12l2 2" fill="none" stroke="#444" stroke-width="1.600"/><path d="M15 5l-4 7M8 14l7 7" stroke="#aaa" stroke-width=".8"/><path d="M14 22c0-3 3-4 5-3M2 22.500h12" fill="none" stroke="#777" stroke-width="1.500"/></symbol>
<symbol id="views" viewBox="0 0 16 16"><path d="M7 1l6 2.500v7L7 13.500l-6-3v-7zM1 3.500L7 6l6-2.500M7 1v12M1 10.500L7 7l6 3.500" fill="#eefaf2" stroke="#1c9c58" stroke-width="1.100"/><path d="M9 12l4 1-1-2 4 2.500-3 2.500v-1.500l-4-1z" fill="#e2502c"/></symbol>
<symbol id="camera" viewBox="0 0 16 16"><path d="M1 5l8-4 6 2v9l-6 3-7-1z" fill="#f4e6e6" stroke="#c43030"/><path d="M5 5l5-2 4 2v5l-5 2-4-2z" fill="#4050b8" stroke="#222a70" stroke-width=".7"/><circle cx="9" cy="7.500" r="2" fill="#e0b8c8" stroke="#222"/></symbol>
<symbol id="folderopen" viewBox="0 0 16 16"><path d="M1 14V3h5l1 2h6v2" fill="#f8d868" stroke="#9c7410"/><path d="M1 14l4-7h11l-3 7z" fill="url(#gYellow)" stroke="#9c7410"/></symbol>
<symbol id="check" viewBox="0 0 16 16"><path d="M2 9l2-1.500L6.500 10C8 6.500 10.500 4 13.500 3l1 1C11.500 6.500 9 9.500 7 13.500H6z" fill="#22c52e" stroke="#139a1e" stroke-width=".6"/></symbol>
<symbol id="max" viewBox="0 0 16 16"><path d="M1.500 2.500h13v11h-13z" fill="#fff" stroke="#111" stroke-width="1.200"/><path d="M1 2.500h14" stroke="#111" stroke-width="1.500"/></symbol>
<symbol id="guideTop" viewBox="0 0 16 24"><path d="M6.500 12v12M7 12.500h9" stroke="#999" stroke-dasharray="1 1" fill="none"/></symbol>
<symbol id="guidePlus" viewBox="0 0 16 24"><path d="M6.500 0v24M7 12.500h9" stroke="#999" stroke-dasharray="1 1"/><path d="M1.500 7.500h10v10h-10z" fill="#fff" stroke="#ddd"/><path d="M3 12.500h7M6.500 9v7" stroke="#111"/></symbol>
<symbol id="guideMinus" viewBox="0 0 16 24"><path d="M6.500 0v8M12 12.500h4" stroke="#999" stroke-dasharray="1 1"/><path d="M1.500 7.500h10v10h-10z" fill="#fff" stroke="#ddd"/><path d="M3 12.500h7" stroke="#111"/></symbol>
<symbol id="guideLeaf" viewBox="0 0 36 24"><path d="M25.500 0v12M26 12.500h9" stroke="#999" stroke-dasharray="1 1"/></symbol>
</svg>

<header class="titlebar">
  <span class="logo">NX</span>
  <div class="qgroup first">
    <button aria-label="保存"><svg class="i16"><use href="#save"/></svg></button>
    <button class="spaced" aria-label="撤销"><svg class="i16"><use href="#undo"/></svg></button>
    <button aria-label="撤销列表"><span class="caret"></span></button>
    <button aria-label="重做"><svg class="i16"><use href="#redo"/></svg></button>
  </div>
  <div class="qgroup">
    <button aria-label="剪切"><svg class="i16"><use href="#cut"/></svg></button>
    <button aria-label="复制"><svg class="i16"><use href="#copy"/></svg></button>
    <button aria-label="粘贴"><svg class="i16"><use href="#paste"/></svg></button>
  </div>
  <div class="qgroup">
    <button aria-label="新建"><svg class="i16"><use href="#newdoc"/></svg></button>
    <button aria-label="新建列表"><span class="caret"></span></button>
  </div>
  <div class="qgroup">
    <button aria-label="重复命令"><svg class="i16"><use href="#handkey"/></svg></button>
  </div>
  <div class="qgroup">
    <button class="withtext"><svg class="i16"><use href="#switchw"/></svg>切换窗口</button>
    <button class="withtext"><svg class="i16"><use href="#window"/></svg>窗口<span class="caret"></span></button>
    <button aria-label="工具条选项"><span class="caret barred"></span></button>
  </div>
  <h1 class="apptitle">NX 11.0.0.33 - 建模 - [_model1.prt （修改的） ]</h1>
</header>

<nav class="tabs">
  <button class="filetab">文件(F)</button>
  <button class="tab active">主页</button>
  <button class="tab">装配</button>
  <button class="tab">曲线</button>
  <button class="tab">分析</button>
  <button class="tab">视图</button>
  <button class="tab">渲染</button>
  <button class="tab">工具</button>
  <button class="tab">应用模块</button>
  <button class="tab">内部</button>
</nav>

<section class="ribbon">
  <div class="group g-sketch">
    <div class="body">
      <button class="big"><svg class="i32"><use href="#sketch"/></svg><span>草图</span></button>
      <div class="gallery">
        <button aria-label="轮廓"><svg class="i24"><use href="#profile"/></svg></button>
        <button aria-label="矩形"><svg class="i24"><use href="#rect"/></svg></button>
        <button aria-label="直线"><svg class="i24"><use href="#line"/></svg></button>
        <button aria-label="圆弧"><svg class="i24"><use href="#arc"/></svg></button>
        <button aria-label="圆"><svg class="i24"><use href="#circle"/></svg></button>
        <button aria-label="点"><svg class="i24"><use href="#plus"/></svg></button>
      </div>
      <div class="gscroll">
        <button aria-label="上翻"><span class="caret up"></span></button>
        <button aria-label="下翻"><span class="caret"></span></button>
        <button aria-label="更多曲线"><span class="caret barred"></span></button>
      </div>
    </div>
    <div class="foot"><span>直接草图</span><button aria-label="选项"><i class="caret"></i></button></div>
  </div>

  <div class="group g-feature">
    <div class="body">
      <button class="big w68"><svg class="i32"><use href="#plane"/></svg><span>基准平面</span><i class="caret"></i></button>
      <button class="big w36"><svg class="i32"><use href="#extrude"/></svg><span>拉伸</span><i class="caret"></i></button>
      <button class="big w44"><svg class="i32"><use href="#hole"/></svg><span>孔</span></button>
      <div class="stack near">
        <button><svg class="i16"><use href="#pattern"/></svg>阵列特征</button>
        <button><svg class="i16"><use href="#unite"/></svg>合并<i class="caret"></i></button>
        <button><svg class="i16"><use href="#shell"/></svg>抽壳</button>
      </div>
      <button class="big w44 after"><svg class="i32"><use href="#blend"/></svg><span>边倒圆</span><i class="caret"></i></button>
      <div class="stack">
        <button><svg class="i16"><use href="#chamfer"/></svg>倒斜角</button>
        <button><svg class="i16"><use href="#trim"/></svg>修剪体</button>
        <button><svg class="i16"><use href="#draft"/></svg>拔模</button>
      </div>
      <button class="big more"><b class="frame"><svg class="i16"><use href="#boss"/></svg></b><span>更多</span><i class="caret"></i></button>
    </div>
    <div class="foot"><span>特征</span><button aria-label="选项"><i class="caret"></i></button></div>
  </div>

  <div class="group g-sync">
    <div class="body">
      <button class="big w44"><svg class="i32"><use href="#moveface"/></svg><span>移动面</span></button>
      <div class="stack">
        <button><svg class="i16"><use href="#offset"/></svg>偏置区域</button>
        <button><svg class="i16"><use href="#replace"/></svg>替换面</button>
        <button><svg class="i16"><use href="#delface"/></svg>删除面</button>
      </div>
      <button class="big more"><b class="frame"><svg class="i16"><use href="#cycle"/></svg></b><span>更多</span><i class="caret"></i></button>
    </div>
    <div class="foot"><span>同步建模</span><button aria-label="选项"><i class="caret"></i></button></div>
  </div>

  <div class="group g-surface">
    <div class="body"><button class="big w42"><svg class="i32"><use href="#surface"/></svg><span>曲面</span><i class="caret"></i></button></div>
  </div>

  <div class="group g-std">
    <div class="rows">
      <div class="row"><svg class="i16"><use href="#sframe"/></svg><svg class="i16"><use href="#layers"/></svg><svg class="i16"><use href="#layerlist"/></svg><hr><svg class="i16"><use href="#tag"/></svg></div>
      <div class="row"><svg class="i16"><use href="#bluecheck"/></svg><svg class="i16"><use href="#wrenchcheck"/></svg><svg class="i16"><use href="#orangecheck"/></svg><hr><svg class="i16"><use href="#boxedit"/></svg></div>
    </div>
    <div class="foot"><span>标准化工具...</span><button aria-label="选项"><i class="caret"></i></button></div>
  </div>
  <div class="group g-gear">
    <div class="rows">
      <div class="row"><svg class="i16"><use href="#gear1"/></svg><svg class="i16"><use href="#gear2"/></svg></div>
      <div class="row"><svg class="i16"><use href="#gearhand"/></svg></div>
    </div>
    <div class="foot"><span>齿...</span><button aria-label="选项"><i class="caret"></i></button></div>
  </div>
  <div class="group g-spring">
    <div class="rows">
      <div class="row"><svg class="i16"><use href="#spring1"/></svg><svg class="i16"><use href="#spring2"/></svg></div>
      <div class="row"><svg class="i16"><use href="#spring3"/></svg><hr><svg class="i16"><use href="#spring4"/></svg></div>
    </div>
    <div class="foot"><span>弹...</span><button aria-label="选项"><i class="caret"></i></button></div>
  </div>
  <div class="group g-mach">
    <div class="rows">
      <div class="row"><svg class="i16"><use href="#probecheck"/></svg><svg class="i16"><use href="#probelist"/></svg></div>
      <div class="row"><svg class="i16"><use href="#probegrid"/></svg><svg class="i16"><use href="#csys"/></svg></div>
    </div>
    <div class="foot"><span>加...</span><button aria-label="选项"><i class="caret"></i></button></div>
  </div>
  <div class="group g-model">
    <div class="rows">
      <div class="row"><svg class="i16"><use href="#tri"/></svg><svg class="i16"><use href="#tabletri"/></svg><svg class="i16"><use href="#folderplus"/></svg><svg class="i16"><use href="#foldergear"/></svg></div>
      <div class="row"><svg class="i16"><use href="#note"/></svg><svg class="i16"><use href="#brushdim"/></svg><hr><span class="fit"><svg><use href="#binoc"/></svg><span>10<em>H7</em></span></span></div>
    </div>
    <div class="foot"><span>建模工具 ...</span><button aria-label="选项"><i class="caret"></i></button></div>
  </div>
  <div class="group g-cubes">
    <div class="rows">
      <div class="row"><svg class="i16"><use href="#cubes"/></svg></div>
      <div class="row"><svg class="i16"><use href="#cubes"/></svg></div>
    </div>
    <div class="foot"><span>'.</span><button aria-label="选项"><i class="caret"></i></button></div>
  </div>
  <div class="group g-dim">
    <div class="rows">
      <div class="row"><svg class="i16"><use href="#dims"/></svg><hr><svg class="i16"><use href="#xmark"/></svg></div>
      <div class="row"><svg class="i16"><use href="#radial"/></svg><svg class="i16"><use href="#radialb"/></svg></div>
    </div>
    <div class="foot"><span>尺寸</span></div>
  </div>
</section>

<section class="selbar">
  <button class="menu"><svg class="i16"><use href="#menuicon"/></svg><span>菜单(<u>M</u>)</span><i class="caret"></i></button>
  <label class="combo c1"><select aria-label="选择过滤器"><option>无选择过滤器</option></select></label>
  <label class="combo c2"><select aria-label="选择范围"><option>整个装配</option></select></label>
  <div class="snap">
    <button aria-label="过滤 1"><svg class="i16"><use href="#f1"/></svg></button>
    <button aria-label="过滤 2"><svg class="i16"><use href="#f2"/></svg></button>
    <button aria-label="过滤 3"><svg class="i16"><use href="#f3"/></svg></button>
    <i class="caret"></i>
    <button aria-label="还原选择"><svg class="i16"><use href="#f4"/></svg></button>
    <button aria-label="还原列表"><svg class="i16"><use href="#f5"/></svg></button>
    <button aria-label="矩形选择"><svg class="i16"><use href="#f6"/></svg></button>
    <i class="caret"></i>
    <button aria-label="边线"><svg class="i16"><use href="#f7"/></svg></button>
    <button aria-label="实体"><svg class="i16"><use href="#f8"/></svg></button>
    <button class="on" aria-label="启用捕捉点"><svg class="i16"><use href="#f9"/></svg></button>
    <button class="on" aria-label="端点"><svg class="i16"><use href="#s1"/></svg></button>
    <button class="on" aria-label="中点"><svg class="i16"><use href="#s2"/></svg></button>
    <button aria-label="控制点"><svg class="i16"><use href="#s3"/></svg></button>
    <button class="on" aria-label="极点"><svg class="i16"><use href="#s4"/></svg></button>
    <button class="on" aria-label="定义点"><svg class="i16"><use href="#s5"/></svg></button>
    <button aria-label="交点"><svg class="i16"><use href="#s6"/></svg></button>
    <button class="on" aria-label="圆心"><svg class="i16"><use href="#s7"/></svg></button>
    <button aria-label="象限点"><svg class="i16"><use href="#s8"/></svg></button>
    <button class="on" aria-label="现有点"><svg class="i16"><use href="#s9"/></svg></button>
    <button class="on" aria-label="曲线上的点"><svg class="i16"><use href="#s10"/></svg></button>
    <button aria-label="面上的点"><svg class="i16"><use href="#s11"/></svg></button>
    <button aria-label="网格点"><svg class="i16"><use href="#s12"/></svg></button>
  </div>
  <div class="snap view">
    <button aria-label="适合窗口"><svg class="i16"><use href="#v1"/></svg></button>
    <button aria-label="平移"><svg class="i16"><use href="#v2"/></svg></button>
    <button aria-label="旋转"><svg class="i16"><use href="#v3"/></svg></button>
    <button aria-label="布局"><svg class="i16"><use href="#v4"/></svg></button>
    <i class="caret"></i>
    <button aria-label="剖切"><svg class="i16"><use href="#v5"/></svg></button>
    <i class="caret"></i>
    <button aria-label="渲染样式"><svg class="i16"><use href="#v6"/></svg></button>
    <i class="caret"></i>
    <button aria-label="显示隐藏"><svg class="i16"><use href="#v7"/></svg></button>
    <i class="caret"></i>
  </div>
</section>

<main class="work">
  <nav class="resbar">
    <button class="cog" aria-label="设置"><svg class="i16"><use href="#gear"/></svg></button>
    <button aria-label="装配导航器"><svg class="i24"><use href="#asmnav"/></svg></button>
    <button class="pre" aria-label="约束导航器"><svg class="i24"><use href="#constr"/></svg></button>
    <button class="current" aria-label="部件导航器"><svg class="i24"><use href="#partnav"/></svg></button>
    <button class="wide" aria-label="重用库"><svg class="i24"><use href="#books"/></svg></button>
    <button class="wide" aria-label="HD3D 工具"><svg class="i24"><use href="#info"/></svg></button>
    <button class="wide" aria-label="Web 浏览器"><svg class="i24"><use href="#webdoc"/></svg></button>
    <button aria-label="历史记录"><svg class="i24"><use href="#clock"/></svg></button>
    <button aria-label="系统材料"><svg class="i24"><use href="#rainbow"/></svg></button>
    <button aria-label="加工向导"><svg class="i24"><use href="#wand"/></svg></button>
    <button aria-label="角色"><svg class="i24"><use href="#robot"/></svg></button>
  </nav>
  <aside class="panel">
    <div class="panelhead"><h2>部件导航器</h2><button aria-label="最大化"><svg class="i16"><use href="#max"/></svg></button></div>
    <div class="treebox">
      <table>
        <colgroup><col class="cname"><col class="cnew"><col></colgroup>
        <thead><tr><th>名称<i class="sort"></i></th><th>最新</th><th>附注</th></tr></thead>
        <tbody>
          <tr><td><div class="node"><svg class="guide"><use href="#guideTop"/></svg><svg class="i16"><use href="#clock"/></svg><span>历史记录模式</span></div></td><td></td><td></td></tr>
          <tr><td><div class="node"><button aria-label="展开"><svg class="guide"><use href="#guidePlus"/></svg></button><svg class="i16"><use href="#views"/></svg><span>模型视图</span></div></td><td></td><td></td></tr>
          <tr><td><div class="node"><button aria-label="展开"><svg class="guide"><use href="#guidePlus"/></svg></button><svg class="i16"><use href="#check"/></svg><svg class="i16"><use href="#camera"/></svg><span>摄像机</span></div></td><td></td><td></td></tr>
          <tr><td><div class="node"><button aria-label="折叠"><svg class="guide"><use href="#guideMinus"/></svg></button><svg class="i16"><use href="#folderopen"/></svg><span>模型历史记录</span></div></td><td></td><td></td></tr>
          <tr><td><div class="node"><svg class="guide leaf"><use href="#guideLeaf"/></svg><input type="checkbox" id="csysOn" checked><svg class="i16"><use href="#csys"/></svg><label for="csysOn">基准坐标系 (0)</label></div></td><td><svg class="i16"><use href="#check"/></svg></td><td></td></tr>
          <tr><td></td><td></td><td></td></tr><tr><td></td><td></td><td></td></tr><tr><td></td><td></td><td></td></tr>
          <tr><td></td><td></td><td></td></tr><tr><td></td><td></td><td></td></tr><tr><td></td><td></td><td></td></tr>
          <tr><td></td><td></td><td></td></tr><tr><td></td><td></td><td></td></tr><tr><td></td><td></td><td></td></tr>
          <tr><td></td><td></td><td></td></tr><tr><td></td><td></td><td></td></tr><tr><td></td><td></td><td></td></tr>
          <tr><td></td><td></td><td></td></tr><tr><td></td><td></td><td></td></tr><tr><td></td><td></td><td></td></tr>
          <tr><td></td><td></td><td></td></tr><tr><td></td><td></td><td></td></tr><tr><td></td><td></td><td></td></tr>
          <tr><td></td><td></td><td></td></tr>
        </tbody>
      </table>
    </div>
  </aside>
  <div class="viewport"></div>
</main>
</body>
</html>
```
FILE: styles.css
```css
* { box-sizing: border-box; }
body {
  margin: 0;
  height: 100vh;
  display: flex;
  flex-direction: column;
  overflow: hidden;
  background: #fff;
  color: #1a1a1a;
  font: 14px/18px "Open Sans", "Noto Sans CJK SC", sans-serif;
}
button {
  border: 0;
  padding: 0;
  margin: 0;
  background: none;
  font: inherit;
  color: inherit;
  display: flex;
  align-items: center;
  justify-content: center;
  white-space: nowrap;
  flex: none;
}
svg { display: block; flex: none; }
.sprite { position: absolute; width: 0; height: 0; }
.i16 { width: 16px; height: 16px; }
.i24 { width: 24px; height: 24px; }
.i32 { width: 32px; height: 32px; }
.caret {
  display: block;
  flex: none;
  width: 8px;
  height: 4px;
  background: #1a1a1a;
  clip-path: polygon(0 0, 100% 0, 50% 100%);
}
.caret.up { background: #aaa; clip-path: polygon(50% 0, 100% 100%, 0 100%); }
.caret.barred {
  height: 7px;
  clip-path: polygon(0 0, 100% 0, 100% 1px, 0 1px, 0 3px, 100% 3px, 50% 100%, 0 3px);
}

/* title bar */
.titlebar { display: flex; align-items: center; height: 28px; padding-bottom: 3px; flex: none; }
.logo {
  width: 44px;
  padding-left: 1px;
  flex: none;
  font: bold 22px/24px "DejaVu Sans", sans-serif;
  color: #8496a6;
}
.qgroup {
  display: flex;
  align-items: center;
  align-self: stretch;
  gap: 7px;
  padding: 0 6px;
  border-left: 1px solid #e2e2e2;
}
.qgroup.first { padding-left: 9px; }
.spaced { margin-left: 6px; }
.withtext { gap: 4px; }
.apptitle {
  margin: 0 22px 0 auto;
  font-size: 15px;
  font-weight: 400;
  white-space: pre;
}

/* tabs */
.tabs {
  display: flex;
  flex: none;
  height: 31px;
  background: #dadada;
  font-size: 16px;
}
.filetab { width: 89px; padding-right: 5px; margin-right: 2px; background: #559fb7; color: #fff; }
.tab { padding: 0 13px; }
.tab.active { background: #fff; color: #0f6680; box-shadow: inset 0 1px #999; }

/* ribbon */
.ribbon {
  display: flex;
  flex: none;
  padding: 5px 0 3px;
  border-bottom: 1px solid #d4d4d4;
  overflow: hidden;
}
.group {
  display: flex;
  flex-direction: column;
  justify-content: space-between;
  flex: none;
  height: 97px;
  border-right: 1px solid #d8d8d8;
}
.g-sketch { width: 198px; }
.g-feature { width: 411px; }
.g-sync { width: 193px; }
.g-surface { width: 43px; }
.g-std { width: 104px; }
.g-gear, .g-mach { width: 52px; }
.g-spring { width: 58px; }
.g-model { width: 98px; }
.g-cubes { width: 29px; }
.g-dim { flex: 1 0 49px; border-right: 0; }
.body { display: flex; }
.g-feature .body { padding-left: 6px; }
.g-sync .body { padding-left: 11px; }
.big { flex-direction: column; justify-content: flex-start; gap: 6px; width: 54px; }
.big .caret { margin-top: -1px; }
.w68 { width: 68px; }
.w36 { width: 36px; }
.w44 { width: 44px; }
.w42 { width: 42px; }
.after { margin-left: 8px; }
.more { width: 38px; margin-left: 11px; gap: 4px; }
.more .caret { margin-top: 1px; }
.frame {
  display: flex;
  align-items: center;
  justify-content: center;
  width: 38px;
  height: 34px;
  border: 1px solid #ddd;
  border-radius: 3px;
}
.gallery {
  display: grid;
  grid-template-columns: repeat(3, 39px);
  grid-template-rows: repeat(2, 38px);
  justify-content: center;
  width: 117px;
  height: 78px;
  margin-left: 1px;
  border: 1px solid #d4d4d4;
}
.gscroll {
  display: flex;
  flex-direction: column;
  justify-content: space-between;
  padding: 12px 0 10px 6px;
}
.stack { display: flex; flex-direction: column; gap: 6px; margin-left: 8px; }
.stack.near { margin-left: 5px; }
.stack button { justify-content: flex-start; gap: 4px; height: 20px; }
.stack .caret { margin-left: 4px; }
.foot {
  display: flex;
  align-items: center;
  height: 14px;
  line-height: 14px;
  color: #0f6680;
}
.foot span { flex: 1; min-width: 0; text-align: center; white-space: nowrap; }
.foot button { width: 22px; padding-right: 2px; }
.rows { display: flex; flex-direction: column; gap: 15px; padding: 9px 0 0 7px; }
.row { display: flex; gap: 7px; }
.row hr { margin: 0 -1px; border: 0; width: 1px; height: 16px; flex: none; background: #ddd; }
.fit {
  display: flex;
  flex-direction: column;
  align-items: center;
  width: 16px;
  height: 16px;
  font: bold 7px/8px "Liberation Sans", sans-serif;
}
.fit svg { width: 16px; height: 9px; }
.fit em { font-style: normal; color: #c22; }
.g-dim .foot span { flex: none; margin-left: 32px; }

/* selection bar */
.selbar {
  display: flex;
  align-items: center;
  flex: none;
  height: 36px;
  border-bottom: 1px solid #8c8c8c;
}
.menu { gap: 5px; width: 98px; height: 28px; padding-left: 8px; justify-content: flex-start; border-right: 1px solid #ddd; }
.combo { position: relative; height: 24px; flex: none; }
.combo select {
  appearance: none;
  width: 100%;
  height: 100%;
  padding: 0 2px;
  border: 1px solid #a3a3a3;
  border-radius: 0;
  background: #fff;
  color: inherit;
  font: inherit;
}
.combo::after {
  content: "";
  position: absolute;
  top: 10px;
  right: 6px;
  width: 10px;
  height: 5px;
  background: #1a1a1a;
  clip-path: polygon(0 0, 100% 0, 50% 100%);
  pointer-events: none;
}
.c1 { width: 167px; margin-left: 12px; }
.c2 { width: 176px; margin-left: 9px; }
.snap { display: flex; align-items: center; gap: 1px; margin-left: 4px; }
.snap button { width: 24px; height: 22px; border: 1px solid transparent; }
.snap button.on { background: #cce6ea; border-color: #aed4da; }
.snap .caret { margin: 0 3px 0 1px; }
.snap.view { margin-left: 6px; padding: 0 6px 0 8px; height: 28px; border: solid #ddd; border-width: 0 1px; }
.snap.view .caret { margin: 0 4px 0 2px; }

/* work area */
.work { display: flex; flex: 1; min-height: 0; }
.resbar {
  display: flex;
  flex-direction: column;
  flex: none;
  width: 30px;
  padding-top: 1px;
  background: #dadada;
  box-shadow: inset -1px 0 #a6a6a6;
}
.resbar button { height: 24px; margin-bottom: 18px; padding-left: 1px; }
.resbar .cog { margin-bottom: 27px; padding: 0 4px 0 0; }
.resbar .pre { margin-bottom: 6px; }
.resbar .wide { margin-bottom: 30px; }
.resbar .current {
  height: 46px;
  margin-bottom: 7px;
  background: #fff;
  border: solid #a6a6a6;
  border-width: 1px 0;
}
.panel {
  display: flex;
  flex-direction: column;
  flex: none;
  width: 384px;
  padding: 0 10px 0 6px;
  font-size: 15px;
}
.panelhead { display: flex; flex: none; justify-content: space-between; align-items: center; height: 31px; padding: 1px 6px 0 4px; }
.panelhead h2 { margin: 0; font-size: 15px; font-weight: 400; }
.treebox { flex: 1; min-height: 0; overflow: hidden; border: solid #ddd; border-width: 1px 1px 0; padding-top: 1px; }
table { width: 100%; border-collapse: collapse; table-layout: fixed; }
.cname { width: 200px; }
.cnew { width: 100px; }
th, td { height: 24px; padding: 0; border-right: 1px solid #e3e3e3; border-bottom: 1px solid #ececec; }
th:last-child, td:last-child { border-right: 0; }
th {
  padding: 0 6px;
  background: #eee;
  border-color: #d0d0d0;
  font-weight: 400;
  text-align: left;
}
td > svg { margin-left: 4px; }
tbody tr:nth-child(even) { background: #f9f9f9; }
.sort {
  display: inline-block;
  width: 12px;
  height: 6px;
  margin: 0 0 3px 18px;
  background: #1a1a1a;
  clip-path: polygon(50% 0, 100% 100%, 0 100%);
}
.node { display: flex; align-items: center; height: 23px; padding-left: 4px; white-space: nowrap; }
.node span { margin-left: 3px; }
.node label { margin-left: 2px; font-weight: 600; }
.guide { width: 16px; height: 24px; }
.guide.leaf { width: 36px; }
.node input {
  appearance: none;
  position: relative;
  width: 13px;
  height: 13px;
  margin: 0 2px 0 1px;
  border: 1px solid #111;
  background: #fff;
}
.node input:checked::before {
  content: "";
  position: absolute;
  inset: 1px;
  background: #22b52e;
  clip-path: polygon(0 50%, 20% 35%, 40% 60%, 85% 0, 100% 12%, 45% 100%, 32% 100%);
}
.viewport { flex: 1; background: #000; }
```
